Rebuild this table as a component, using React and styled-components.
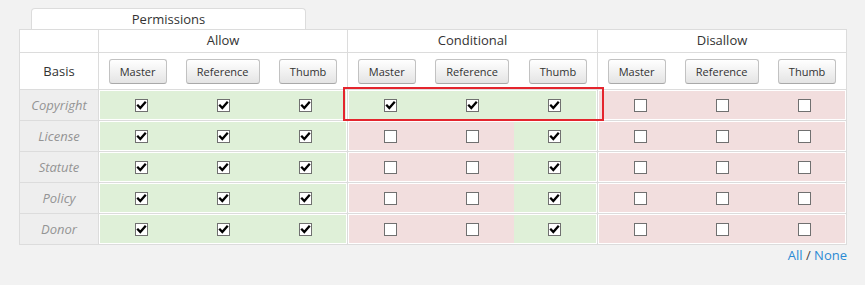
import React from "react";
import styled, { createGlobalStyle } from "styled-components";

const GlobalStyle = createGlobalStyle`
  html, body {
    margin: 0;
    padding: 0;
    background: #f2f2f2;
  }
  body {
    font-family: "Open Sans", "Noto Sans", Arial, sans-serif;
    color: #333;
  }
`;

const Page = styled.div`
  padding: 8px 0 0 19px;
  width: 828px;
`;

const Tab = styled.div`
  margin-left: 12px;
  width: 273px;
  height: 20px;
  border: 1px solid #dcdcdc;
  border-bottom: none;
  border-radius: 4px 4px 0 0;
  background: #fff;
  font-size: 13px;
  line-height: 20px;
  text-align: center;
`;

const Grid = styled.div`
  display: grid;
  grid-template-columns: 79px 249px 250px 249px;
  grid-auto-rows: auto;
  border-left: 1px solid #dcdcdc;
  border-top: 1px solid #dcdcdc;
  background: #fff;
`;

const Cell = styled.div`
  box-sizing: border-box;
  border-right: 1px solid #dcdcdc;
  border-bottom: 1px solid #dcdcdc;
  height: ${(p) => p.$h}px;
`;

const GroupTitle = styled(Cell)`
  font-size: 13px;
  line-height: 21px;
  text-align: center;
`;

const BasisHead = styled(Cell)`
  display: flex;
  align-items: center;
  justify-content: center;
  font-size: 13px;
`;

const ButtonBar = styled(Cell)`
  display: flex;
  align-items: center;
  justify-content: space-around;
`;

const TypeButton = styled.button`
  box-sizing: border-box;
  height: 25px;
  padding: 0 10px;
  border: 1px solid #c2c2c2;
  border-bottom-color: #a9a9a9;
  border-radius: 3px;
  background: linear-gradient(#ffffff, #e4e4e4);
  font-family: "Open Sans", "Noto Sans", Arial, sans-serif;
  font-size: 11px;
  color: #333;
  cursor: pointer;
`;

const BasisLabel = styled(Cell)`
  display: flex;
  align-items: center;
  justify-content: center;
  background: #eeeeee;
  color: #949494;
  font-size: 13px;
  font-style: italic;
`;

const Group = styled(Cell)`
  position: relative;
  display: flex;
  padding: 1px;
`;

const Slot = styled.div`
  flex: 1;
  display: flex;
  align-items: center;
  justify-content: center;
  background: ${(p) => (p.$on ? "#dff0d8" : "#f2dede")};
`;

const Highlight = styled.div`
  position: absolute;
  top: -3px;
  left: -5px;
  right: -7px;
  bottom: -1px;
  border: 2px solid #e4252d;
  pointer-events: none;
  z-index: 2;
`;

const Footer = styled.div`
  margin-top: 1px;
  text-align: right;
  font-size: 13px;
  line-height: 18px;
  color: #444;
`;

const Link = styled.a`
  color: #2a8ad4;
  text-decoration: none;
`;

function Check({ on }) {
  return (
    <svg width="13" height="13" viewBox="0 0 13 13">
      <rect x="0.5" y="0.5" width="12" height="12" fill="#fff" stroke="#707070" />
      {on && (
        <path
          d="M3 6.6 L5.3 9 L10 3.6"
          fill="none"
          stroke="#000"
          strokeWidth="2.3"
          strokeLinecap="square"
        />
      )}
    </svg>
  );
}

const groups = ["Allow", "Conditional", "Disallow"];
const types = ["Master", "Reference", "Thumb"];

const rows = [
  { basis: "Copyright", values: [[1, 1, 1], [1, 1, 1], [0, 0, 0]], mark: 1 },
  { basis: "License", values: [[1, 1, 1], [0, 0, 1], [0, 0, 0]] },
  { basis: "Statute", values: [[1, 1, 1], [0, 0, 1], [0, 0, 0]] },
  { basis: "Policy", values: [[1, 1, 1], [0, 0, 1], [0, 0, 0]] },
  { basis: "Donor", values: [[1, 1, 1], [0, 0, 1], [0, 0, 0]] },
];

export default function App() {
  return (
    <>
      <GlobalStyle />
      <Page>
        <Tab>Permissions</Tab>
        <Grid>
          <Cell $h={23} />
          {groups.map((g) => (
            <GroupTitle key={g} $h={23}>
              {g}
            </GroupTitle>
          ))}

          <BasisHead $h={37}>Basis</BasisHead>
          {groups.map((g) => (
            <ButtonBar key={g} $h={37}>
              {types.map((t) => (
                <TypeButton key={t}>{t}</TypeButton>
              ))}
            </ButtonBar>
          ))}

          {rows.map((row) => (
            <React.Fragment key={row.basis}>
              <BasisLabel $h={31}>{row.basis}</BasisLabel>
              {row.values.map((vals, gi) => (
                <Group key={gi} $h={31}>
                  {vals.map((v, ti) => (
                    <Slot key={ti} $on={!!v}>
                      <Check on={!!v} />
                    </Slot>
                  ))}
                  {row.mark === gi && <Highlight />}
                </Group>
              ))}
            </React.Fragment>
          ))}
        </Grid>
        <Footer>
          <Link href="#all">All</Link> / <Link href="#none">None</Link>
        </Footer>
      </Page>
    </>
  );
}
